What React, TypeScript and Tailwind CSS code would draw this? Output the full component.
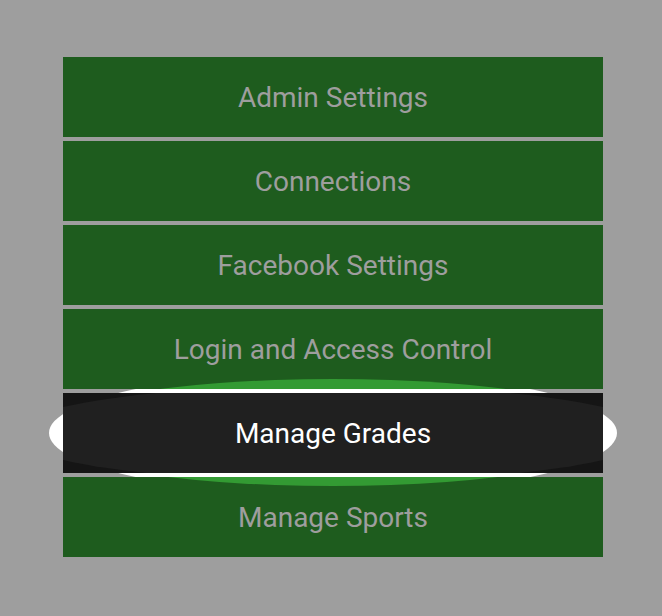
import React from "react";

const items = [
  "Admin Settings",
  "Connections",
  "Facebook Settings",
  "Login and Access Control",
  "Manage Grades",
  "Manage Sports",
];

const ACTIVE = 4;

export default function App() {
  return (
    <div
      className="min-h-[616px] w-full bg-[#9e9e9e] pt-[57px] pl-[63px]"
      style={{ fontFamily: "Roboto, 'Noto Sans', sans-serif" }}
    >
      <div className="relative isolate flex w-[540px] flex-col gap-[4px]">
        {items.map((label, i) => {
          if (i === ACTIVE) {
            return (
              <div key={label} className="relative h-[80px]">
                <div className="absolute -z-10 left-[-14px] top-[-21px] h-[122px] w-[568px] rounded-[50%] bg-white" />
                <div className="relative flex h-full items-center justify-center overflow-hidden bg-[#151515] pt-[2px]">
                  <div className="absolute left-[-52px] top-[-8px] h-[97px] w-[644px] rounded-[50%] bg-[#202020]" />
                  <span className="relative text-[28px] text-white">{label}</span>
                </div>
              </div>
            );
          }
          const above = i === ACTIVE - 1;
          const below = i === ACTIVE + 1;
          return (
            <div
              key={label}
              className="relative flex h-[80px] items-center justify-center overflow-hidden bg-[#1e5c1e] pt-[2px]"
            >
              {above && (
                <div className="absolute left-[-27px] top-[70px] h-[107px] w-[594px] rounded-[50%] bg-[#339a33]" />
              )}
              {below && (
                <div className="absolute left-[-27px] top-[-98px] h-[107px] w-[594px] rounded-[50%] bg-[#339a33]" />
              )}
              <span className="relative text-[28px] text-[#9e9e9e]">{label}</span>
            </div>
          );
        })}
      </div>
    </div>
  );
}
